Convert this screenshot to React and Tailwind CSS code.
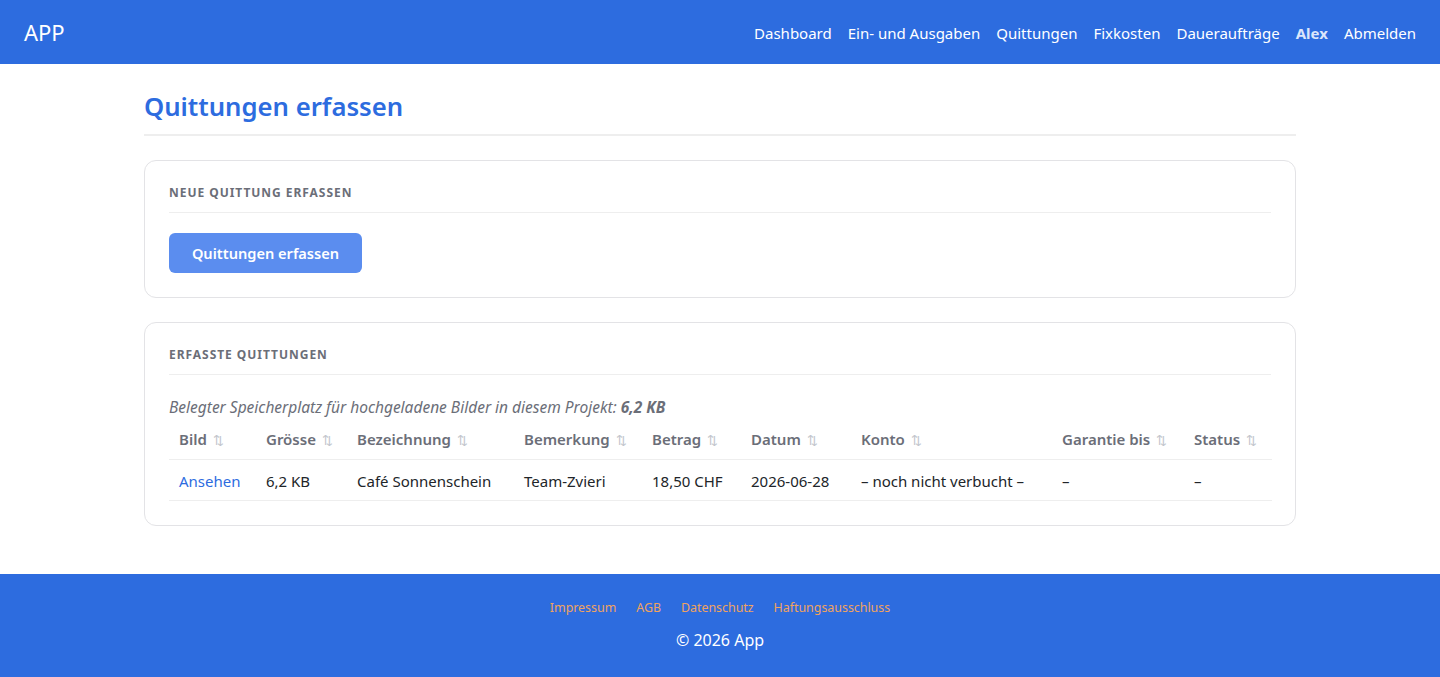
import React from "react";

const cols = [
  { label: "Bild", w: "w-[87px]" },
  { label: "Grösse", w: "w-[91px]" },
  { label: "Bezeichnung", w: "w-[167px]" },
  { label: "Bemerkung", w: "w-[128px]" },
  { label: "Betrag", w: "w-[99px]" },
  { label: "Datum", w: "w-[110px]" },
  { label: "Konto", w: "w-[201px]" },
  { label: "Garantie bis", w: "w-[132px]" },
  { label: "Status", w: "w-[88px]" },
];

const row = ["Ansehen", "6,2 KB", "Café Sonnenschein", "Team-Zvieri", "18,50 CHF", "2026-06-28", "– noch nicht verbucht –", "–", "–"];

export default function App() {
  return (
    <div className="min-h-[677px] flex flex-col bg-white text-[#212529]" style={{ fontFamily: '"Noto Sans", "Open Sans", sans-serif' }}>
      <header className="h-16 bg-[#2d6cdf] flex items-center justify-between px-6 text-white">
        <div className="text-[22px] leading-none">APP</div>
        <nav className="flex items-center gap-4 text-[15px] pt-[2px]">
          <span>Dashboard</span>
          <span>Ein- und Ausgaben</span>
          <span>Quittungen</span>
          <span>Fixkosten</span>
          <span>Daueraufträge</span>
          <span className="font-bold text-[#dbe6fb]">Alex</span>
          <span>Abmelden</span>
        </nav>
      </header>

      <main className="flex-1 w-[1152px] mx-auto pt-[26px] pb-12">
        <h1 className="text-[25.7px] font-semibold text-[#2d6cdf] leading-[34px] pb-[10px] border-b-2 border-[#eeeeee]">Quittungen erfassen</h1>

        <section className="mt-6 border border-[#e3e3e6] rounded-xl px-6 pt-6 pb-6">
          <h2 className="text-[12px] font-bold tracking-[0.08em] text-[#6b6e78] leading-4 pb-[11px] border-b border-[#eeeeee]">NEUE QUITTUNG ERFASSEN</h2>
          <button className="mt-5 h-10 w-[193px] rounded-md bg-[#5b8def] text-white text-[14.6px] font-semibold pt-[2px]">Quittungen erfassen</button>
        </section>

        <section className="mt-6 border border-[#e3e3e6] rounded-xl px-6 pt-6 pb-6">
          <h2 className="text-[12px] font-bold tracking-[0.08em] text-[#6b6e78] leading-4 pb-[11px] border-b border-[#eeeeee]">ERFASSTE QUITTUNGEN</h2>
          <p className="mt-[22px] italic text-[15.5px] text-[#6b6e78] leading-5">
            Belegter Speicherplatz für hochgeladene Bilder in diesem Projekt: <b className="font-bold">6,2 KB</b>
          </p>
          <table className="mt-[2px] w-full border-collapse table-fixed text-[15px]">
            <thead>
              <tr className="border-b border-[#eeeeee]">
                {cols.map((c) => (
                  <th key={c.label} className={`${c.w} text-left font-semibold text-[#6b6e78] px-[10px] h-10 whitespace-nowrap`}>
                    {c.label}
                    <span className="ml-[6px] text-[13px] text-[#c2c5cc] font-normal">⇅</span>
                  </th>
                ))}
              </tr>
            </thead>
            <tbody>
              <tr className="border-b border-[#eeeeee]">
                {row.map((v, i) => (
                  <td key={i} className={`px-[10px] h-[41px] pt-[3px] whitespace-nowrap ${i === 0 ? "text-[#2d6cdf]" : "text-[#212529]"}`}>{v}</td>
                ))}
              </tr>
            </tbody>
          </table>
        </section>
      </main>

      <footer className="h-[103px] bg-[#2d6cdf] flex flex-col items-center pt-6">
        <div className="flex gap-5 text-[12.4px] text-[#f0a35e] leading-5">
          <span>Impressum</span>
          <span>AGB</span>
          <span>Datenschutz</span>
          <span>Haftungsausschluss</span>
        </div>
        <div className="mt-[10px] text-white text-[16px] leading-6">© 2026 App</div>
      </footer>
    </div>
  );
}
